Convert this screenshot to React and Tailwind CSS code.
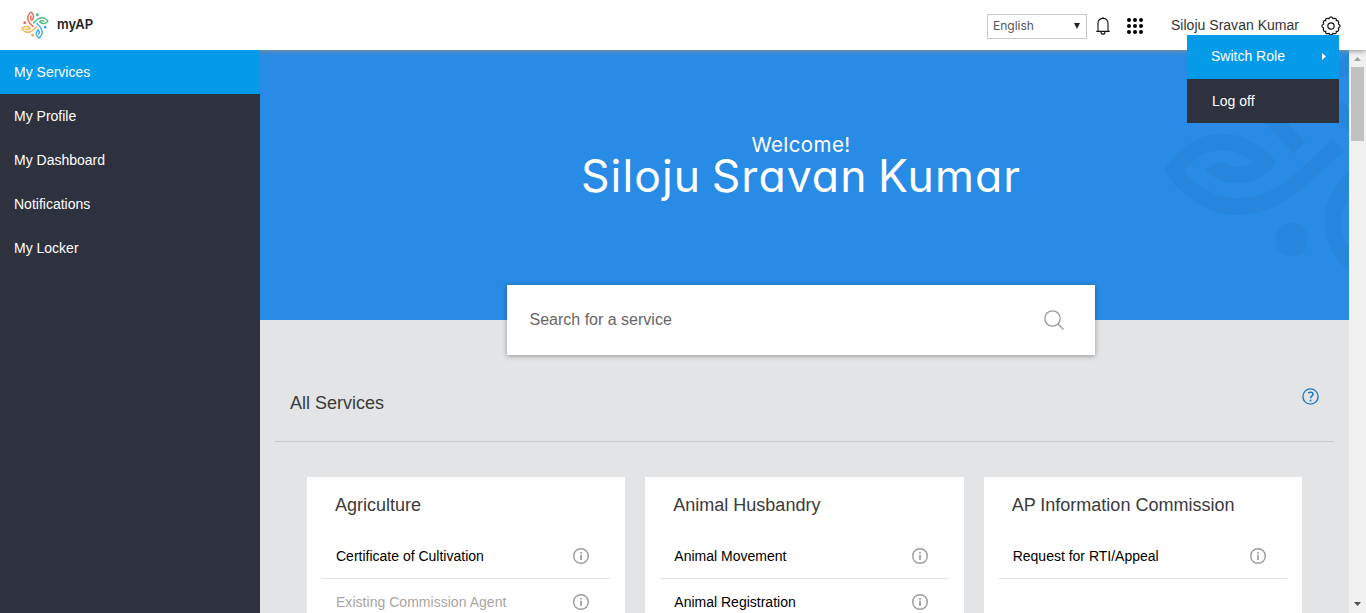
import React from "react";

const NAV = ["My Services", "My Profile", "My Dashboard", "Notifications", "My Locker"];

const GROUPS = [
  { title: "Agriculture", items: [["Certificate of Cultivation", true], ["Existing Commission Agent", false]] },
  { title: "Animal Husbandry", items: [["Animal Movement", true], ["Animal Registration", true]] },
  { title: "AP Information Commission", items: [["Request for RTI/Appeal", true]] },
];

// One arm of the emblem with its dot; the emblem turns it around (532.5, 50.5).
const ARM =
  "M72 182C110 120 170 72 248 72C320 72 375 115 410 158C375 200 335 220 296 220C255 220 220 205 197 180C212 166 228 158 248 157C262 167 280 171 295 171C312 171 328 166 342 157C312 135 280 120 248 120C200 120 160 145 132 182C170 230 230 265 296 265C370 265 430 228 497 165L577 88L612 122L520 207C450 270 375 315 296 315C200 315 125 255 72 182Z";

function Emblem({ colors }) {
  return colors.map((color, i) => (
    <g key={i} transform={`rotate(${i * 90} 532.5 50.5)`} fill={color}>
      <path d={ARM} />
      <circle cx="455" cy="389" r="49" />
    </g>
  ));
}

function Logo() {
  return (
    <svg className="h-7 w-7" viewBox="69 -415 930 930">
      <Emblem colors={["#f7b04c", "#ef6c5a", "#4dbb84", "#45a8e6"]} />
    </svg>
  );
}

function HeroPattern() {
  return (
    <svg className="absolute bottom-0 right-0 h-[270px] w-[209px]" viewBox="0 -180 627 810">
      <Emblem colors={["#2685dc", "#2685dc", "#2685dc", "#2685dc"]} />
    </svg>
  );
}

function BellIcon() {
  return (
    <svg className="h-[18px] w-[14px]" viewBox="0 0 14 18" fill="none" stroke="#111" strokeWidth="1.100">
      <path d="M0.300 14.400H13.700M2 14.200V6.500C2 3.200 4 1.400 7 1.400S12 3.200 12 6.500V14.200M7 1.400V0M4.900 14.600C5 16.400 5.900 17.200 7 17.200S9 16.400 9.100 14.600" />
    </svg>
  );
}

function GridIcon() {
  return (
    <svg className="h-4 w-4" viewBox="0 0 16 16" fill="#000">
      {[2, 8, 14].map((y) => [2, 8, 14].map((x) => <circle key={`${x}-${y}`} cx={x} cy={y} r="2" />))}
    </svg>
  );
}

function GearIcon() {
  return (
    <svg className="h-5 w-5" viewBox="0 0 20 20" fill="none" stroke="#111" strokeWidth="1.200">
      <path d="M8 2.600Q10 -0.900 12 2.600Q15.900 1.500 15.300 4.700Q18.500 4.100 17.400 8Q20.900 10 17.400 12Q18.500 15.900 15.300 15.300Q15.900 18.500 12 17.400Q10 20.900 8 17.400Q4.100 18.500 4.700 15.300Q1.500 15.900 2.600 12Q-0.900 10 2.600 8Q1.500 4.100 4.700 4.700Q4.100 1.500 8 2.600Z" />
      <circle cx="10" cy="10" r="3.200" />
    </svg>
  );
}

function InfoIcon() {
  return (
    <svg className="h-4 w-4 shrink-0" viewBox="0 0 16 16" fill="none" stroke="#9b9b9b">
      <circle cx="8" cy="8" r="7.300" strokeWidth="1.400" />
      <path d="M8 6.800V12" strokeWidth="1.700" />
      <path d="M8 4V5.600" strokeWidth="1.700" />
    </svg>
  );
}

function HelpIcon() {
  return (
    <svg className="h-[17px] w-[17px]" viewBox="0 0 17 17" fill="none" stroke="#2079c3">
      <circle cx="8.500" cy="8.500" r="7.600" strokeWidth="1.400" />
      <path d="M6.200 5.100C6.900 4.500 7.700 4.300 8.600 4.300C10 4.300 11 5.100 11 6.300C11 8.200 8.600 8.200 8.600 10.300" strokeWidth="1.500" />
      <path d="M8.600 11.700V13.400" strokeWidth="1.700" />
    </svg>
  );
}

function Header() {
  return (
    <header className="relative z-20 flex h-[50px] shrink-0 items-center bg-white pl-[21px] pr-[25px] shadow-[0_1px_5px_#8a8a8a]">
      <Logo />
      <span className="ml-2 font-['Inter',sans-serif] text-[13px] font-semibold text-[#222]">myAP</span>
      <div className="ml-auto flex items-center pt-[2px]">
        <div className="flex h-[25px] w-[100px] items-center justify-between border border-[#c8c8c8] pl-[5px] pr-[6px] font-['Inter',sans-serif] text-[12px] text-[#555] [font-feature-settings:'cv11']">
          <span>English</span>
          <svg className="h-[6px] w-[6px]" viewBox="0 0 6 6"><path d="M0 0H6L3 6Z" fill="#222" /></svg>
        </div>
        <div className="-mt-px ml-[9px]"><BellIcon /></div>
        <div className="ml-[17px]"><GridIcon /></div>
        <span className="-mt-[2px] ml-7 w-[128px] whitespace-nowrap text-[14px] tracking-[0.020px] text-[#333]">Siloju Sravan Kumar</span>
        <div className="-mt-px ml-[22px]"><GearIcon /></div>
      </div>
      <div className="absolute right-[27px] top-[35px] w-[152px] text-[14px] text-white">
        <div className="flex h-11 items-center justify-between bg-[#059be8] pb-[2px] pl-6 pr-[13px]">
          Switch Role
          <svg className="h-[7px] w-1" viewBox="0 0 4 7"><path d="M0 0L4 3.500L0 7Z" fill="#fff" /></svg>
        </div>
        <div className="flex h-11 items-center bg-[#2e323e] pl-[25px]">Log off</div>
      </div>
    </header>
  );
}

function ServiceCard({ title, items }) {
  return (
    <section className="h-[200px] bg-white px-[15px] pt-[14px]">
      <h3 className="pl-[13px] text-[18px] leading-7 text-[#3a3a3a]">{title}</h3>
      <ul className="mt-[14px]">
        {items.map(([name, enabled]) => (
          <li key={name} className="flex h-[46px] items-center justify-between border-b border-[#e2e3e5] pl-[14px] pr-[21px] text-[14px]">
            <span className={enabled ? "pt-[2px] text-black" : "pt-[2px] tracking-[0.030px] text-[#a9a59f]"}>{name}</span>
            <InfoIcon />
          </li>
        ))}
      </ul>
    </section>
  );
}

export default function App() {
  return (
    <div className="flex h-[613px] w-[1366px] flex-col overflow-hidden bg-white font-['Liberation_Sans',Arial,sans-serif]">
      <Header />
      <div className="flex min-h-0 flex-1">
        <nav className="relative z-30 w-[260px] shrink-0 bg-[#2e323e] text-[14px] text-white">
          {NAV.map((name, i) => (
            <a key={name} className={`flex h-11 items-center pl-[14px] ${i === 0 ? "bg-[#059be8]" : ""}`}>{name}</a>
          ))}
        </nav>
        <main className="min-w-0 flex-1 overflow-hidden bg-[#e3e4e6]">
          <div className="relative h-[270px] bg-[#288be5] pr-[7px] pt-[81px] text-center font-['Inter',sans-serif] text-white [font-feature-settings:'cv11']">
            <HeroPattern />
            <p className="relative text-[20.500px] leading-7 tracking-[0.400px]">Welcome!</p>
            <h1 className="relative text-[44.500px] font-normal leading-[35px] tracking-[1.050px] [word-spacing:-3px]">Siloju Sravan Kumar</h1>
          </div>
          <div className="relative -mt-[35px] ml-[247px] flex h-[70px] w-[588px] items-center justify-between bg-white pl-[22.500px] pr-[31px] shadow-[0_1px_5px_rgba(0,0,0,0.35)]">
            <span className="text-[16px] text-[#666]">Search for a service</span>
            <svg className="h-5 w-5" viewBox="0 0 20 20" fill="none" stroke="#999" strokeWidth="1.300"><circle cx="8.500" cy="8.500" r="7.700" /><path d="M14 14L19.500 19.500" /></svg>
          </div>
          <div className="ml-[15px] mr-[15px] flex h-[87px] justify-between border-b border-[#c8cacd] pl-[15px] pr-[15px]">
            <h2 className="pt-[34px] text-[18px] leading-7 text-[#3a3a3a]">All Services</h2>
            <div className="pt-[33px]"><HelpIcon /></div>
          </div>
          <div className="ml-[47px] mr-[47px] mt-[35px] grid grid-cols-3 gap-5">
            {GROUPS.map((g) => <ServiceCard key={g.title} {...g} />)}
          </div>
        </main>
        <div className="flex w-[17px] shrink-0 flex-col items-center bg-[#f1f1f1]">
          <svg className="mt-[7px] h-1 w-[7px]" viewBox="0 0 7 4"><path d="M0 4H7L3.500 0Z" fill="#a0a0a0" /></svg>
          <div className="mt-[6px] h-[74px] w-[13px] bg-[#c1c1c1]" />
          <svg className="mb-[7px] mt-auto h-1 w-[7px]" viewBox="0 0 7 4"><path d="M0 0H7L3.500 4Z" fill="#505050" /></svg>
        </div>
      </div>
    </div>
  );
}
